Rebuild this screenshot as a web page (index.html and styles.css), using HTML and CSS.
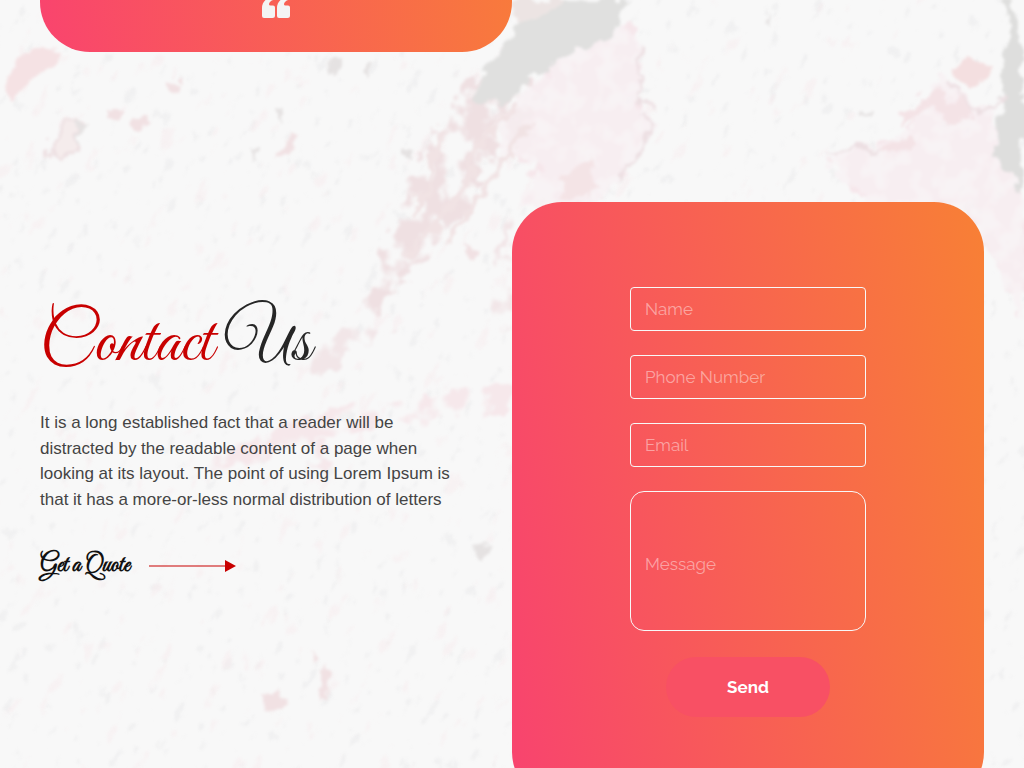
FILE: index.html
```html
<!DOCTYPE html>
<html lang="en">
<head>
<meta charset="utf-8">
<meta name="viewport" content="width=device-width, initial-scale=1">
<title>Contact Us</title>
<link rel="stylesheet" href="styles.css">
</head>
<body>
<div class="page">
  <svg class="marble" viewBox="0 0 1024 768" preserveAspectRatio="xMidYMid slice" aria-hidden="true">
    <defs>
      <filter id="rough" x="-10%" y="-10%" width="120%" height="120%">
        <feTurbulence type="fractalNoise" baseFrequency="0.06" numOctaves="3" seed="4" result="n"/>
        <feDisplacementMap in="SourceGraphic" in2="n" scale="22" xChannelSelector="R" yChannelSelector="G"/>
        <feGaussianBlur stdDeviation="1.8"/>
      </filter>
      <filter id="torn" x="-10%" y="-10%" width="120%" height="120%">
        <feTurbulence type="fractalNoise" baseFrequency="0.055" numOctaves="3" seed="4" result="n"/>
        <feDisplacementMap in="SourceGraphic" in2="n" scale="30" xChannelSelector="R" yChannelSelector="G" result="d"/>
        <feTurbulence type="fractalNoise" baseFrequency="0.045" numOctaves="3" seed="9"/>
        <feColorMatrix values="0 0 0 0 0  0 0 0 0 0  0 0 0 0 0  0 6 0 0 -2.3" result="holes"/>
        <feComposite in="d" in2="holes" operator="in"/>
        <feGaussianBlur stdDeviation="1.8"/>
      </filter>
      <filter id="pinkSpeck" x="0" y="0" width="100%" height="100%">
        <feTurbulence type="fractalNoise" baseFrequency="0.07 0.035" numOctaves="3" seed="12"/>
        <feColorMatrix values="0 0 0 0 0.93  0 0 0 0 0.82  0 0 0 0 0.84  9 0 0 0 -6"/>
        <feGaussianBlur stdDeviation="1.3"/>
      </filter>
      <filter id="greySpeck" x="0" y="0" width="100%" height="100%">
        <feTurbulence type="fractalNoise" baseFrequency="0.09 0.05" numOctaves="3" seed="31"/>
        <feColorMatrix values="0 0 0 0 0.82  0 0 0 0 0.82  0 0 0 0 0.83  9 0 0 0 -5.900"/>
        <feGaussianBlur stdDeviation="1.3"/>
      </filter>
    </defs>
    <g transform="rotate(28 512 384)">
      <rect x="-300" y="-300" width="1700" height="1400" filter="url(#greySpeck)" opacity=".5"/>
      <rect x="-300" y="-300" width="1000" height="1400" filter="url(#pinkSpeck)" opacity=".4"/>
    </g>
    <g filter="url(#torn)">
      <path fill="#f6e7eb" d="M500 118 562 54 625 22 646 62 638 98 656 130 632 160 606 196 570 208 520 204 540 168 500 150Z"/>
      <path fill="#f6e7eb" d="M826 156 866 146 902 136 926 100 938 72 960 92 986 108 1004 150 1024 192V320L990 250 962 206 870 204 846 184Z"/>
      <path fill="#efe0e2" d="M474 80 520 70 540 110 500 150 478 186 456 226 420 260 386 300 360 336 372 270 396 220 412 180 428 140Z"/>
      <path fill="#f2e6e8" d="M520 196 506 240 512 330 490 330 500 240ZM400 330 350 350 320 380 310 350 360 320Z"/>
      <path fill="#f6e8eb" d="M320 410 400 402 512 388V412L380 422 300 446 210 476 196 466ZM310 444H326L326 478 314 474Z"/>
    </g>
    <g filter="url(#rough)">
      <path fill="#f8f1f3" fill-opacity=".7" d="M500 118 562 54 625 22 646 62 638 98 656 130 632 160 606 196 570 208 520 204 540 168 500 150ZM826 156 866 146 902 136 926 100 938 72 960 92 986 108 1004 150 1024 192V320L990 250 962 206 870 204 846 184Z"/>
      <path fill="#f4e4e6" d="M572 166 592 156 598 184 572 204 558 196Z"/>
      <path fill="#e0e0df" d="M530 0H632L610 36 572 54 540 72 512 94 490 106 474 100 482 70 512 38Z"/>
      <path fill="#ece4e3" d="M512 0H564L540 18 516 24Z"/>
      <path fill="#f4e3e6" d="M900 116 936 88 950 104 968 98 976 116 948 122 936 108 900 122ZM878 148 914 134 922 140 890 156Z"/>
      <path fill="#dededd" d="M1004 0H1012L1018 30 1024 60V192L1008 172 994 150 1002 86 1008 44Z"/>
      <ellipse cx="970" cy="72" rx="18" ry="14" fill="#f4dfe0"/>
      <path fill="none" stroke="#ecdfe2" stroke-width="3" d="M946 80Q960 102 982 110 1000 108 1002 96M644 50 638 92 656 112M826 156Q850 148 878 148M640 110 652 128 644 146 618 178"/>
      <path fill="#f5e2e4" d="M4 80 30 48 60 50 58 66 30 80 6 104Z"/>
      <path fill="#f5ecec" stroke="#eee1e3" stroke-width="4" d="M60 122 78 124 78 144 64 162 52 156 52 140Z"/>
      <path fill="#f1e1e3" d="M288 136 300 136 292 154 278 162ZM166 82H182L176 92 166 90ZM112 106H124L120 122 112 120ZM134 118H150L144 134 134 128ZM264 698 280 690 286 702 266 712ZM318 682 328 662 332 676 322 702ZM308 648 318 656 312 664ZM464 244 480 248 472 262Z"/>
      <path fill="#e5e2e2" d="M328 62H342V74L332 76ZM274 112 284 108 280 126ZM252 148 260 148 250 162ZM362 68 374 62 370 76ZM476 550 488 544 484 560ZM860 110H872L866 118ZM764 18 776 14 768 24ZM404 150H412V158H404ZM72 126 84 126 80 142Z"/>
    </g>
    <path class="vein" filter="url(#rough)" d="M516 104 480 146 462 190 430 232 404 262M440 130 430 180 410 220M530 120 490 180 450 240"/>
  </svg>

  <main class="content">
    <section class="testimonial" aria-label="Testimonial">
      <svg class="quote" viewBox="0 0 28 20" aria-hidden="true"><path id="mark" d="M3.500 0H11C8.500 1 7 2.500 7 4.500Q7 5.500 8.500 5.500H11Q13 5.500 13 7.500V15.500Q13 18 10.500 18H2Q0 18 0 16V8Q0 3 3.500 0Z"/><use href="#mark" x="15"/></svg>
    </section>

    <section class="contact">
      <div class="intro">
        <h1 class="title"><span class="accent">Contact</span> Us</h1>
        <p class="lead">It is a long established fact that a reader will be distracted by the readable content of a page when looking at its layout. The point of using Lorem Ipsum is that it has a more-or-less normal distribution of letters</p>
        <a class="cta" href="#quote">Get a Quote
          <svg class="arrow" viewBox="0 0 87 12" aria-hidden="true"><path class="arrow-line" d="M0 6H77"/><path class="arrow-head" d="M76 0 87 6 76 12Z"/></svg>
        </a>
      </div>
      <form class="card" id="quote">
        <input class="field" type="text" placeholder="Name" aria-label="Name">
        <input class="field" type="tel" placeholder="Phone Number" aria-label="Phone Number">
        <input class="field" type="email" placeholder="Email" aria-label="Email">
        <input class="field message" type="text" placeholder="Message" aria-label="Message">
        <button class="send" type="button">Send</button>
      </form>
    </section>
  </main>
</div>
</body>
</html>
```
FILE: styles.css
```css
* {
  box-sizing: border-box;
}

body {
  margin: 0;
  background: #f8f8f8;
  color: #444;
  font-family: "Liberation Sans", Arial, sans-serif;
  font-size: 17px;
  line-height: 1.5;
}

.page {
  position: relative;
  height: 100vh;
  overflow: hidden;
}

.marble {
  position: absolute;
  inset: 0;
  width: 100%;
  height: 100%;
}

.vein {
  fill: none;
  stroke: #f1e3e4;
  stroke-width: 6;
}

.content {
  position: relative;
  padding: 0 40px;
}

.testimonial {
  width: 50%;
  padding-bottom: 32px;
  border-radius: 0 0 50px 50px;
  background: linear-gradient(84deg, #f9446e, #f87a3c);
}

.quote {
  display: block;
  width: 28px;
  height: 20px;
  margin: 0 auto;
  fill: #f4f4f4;
}

.contact {
  display: grid;
  grid-template-columns: 1fr 1fr;
  margin-top: 150px;
}

.intro {
  padding: 98px 60px 0 0;
}

.title {
  margin: 0 0 22px;
  color: #262626;
  font: 400 70px/88px "Great Vibes", "Liberation Serif", serif;
}

.accent {
  color: #c80000;
}

.lead {
  margin: 0 0 40px;
}

.cta {
  display: inline-flex;
  align-items: center;
  gap: 19px;
  color: #111;
  font: 700 24px/28px "Great Vibes", "Liberation Serif", serif;
  text-decoration: none;
}

.arrow {
  width: 87px;
  height: 12px;
}

.arrow-line {
  stroke: #c80000;
  stroke-opacity: .5;
  stroke-width: 2;
}

.arrow-head {
  fill: #c80000;
}

.card {
  display: flex;
  flex-direction: column;
  align-items: center;
  gap: 24px;
  padding: 85px 0;
  border-radius: 50px;
  background: linear-gradient(80deg, #f8436f, #f88035);
}

.field {
  width: 50%;
  height: 44px;
  padding: 0 14px;
  border: 1px solid #f8f8f8;
  border-radius: 4px;
  background: transparent;
  color: #fff;
  font: 400 17px/24px Raleway, "Open Sans", sans-serif;
}

.field::placeholder {
  color: rgba(255, 255, 255, .45);
  opacity: 1;
}

.message {
  height: 140px;
  padding-top: 6px;
  border-radius: 14px;
}

.send {
  width: 164px;
  height: 60px;
  margin-top: 2px;
  border: 0;
  border-radius: 30px;
  background: #f85064;
  color: #fff;
  font: 700 17px/24px Raleway, "Open Sans", sans-serif;
}
```
